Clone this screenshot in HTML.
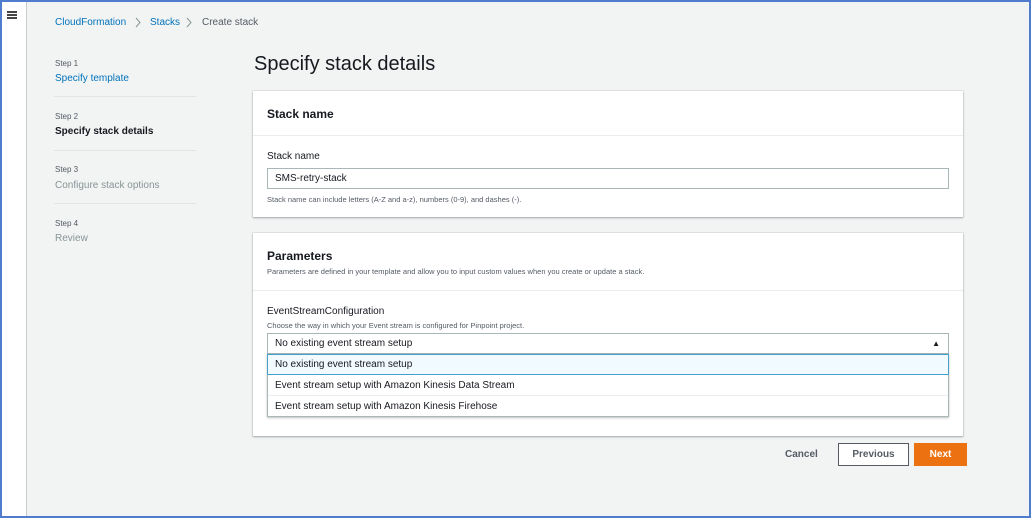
<!DOCTYPE html>
<html><head><meta charset="utf-8"><style>
*{box-sizing:border-box;margin:0;padding:0}
body{width:1031px;height:518px;overflow:hidden;font-family:"Liberation Sans",sans-serif;background:#f2f3f3;position:relative;color:#16191f}
.frame{position:absolute;left:0;top:0;width:1031px;height:518px;border:2px solid #4f7ccc;pointer-events:none;z-index:10}
.nav{position:absolute;left:0;top:0;width:27px;height:518px;background:#fff;border-right:1px solid #c8cbcc}
.a{position:absolute;white-space:nowrap}
.link{color:#0073bb}
.card{position:absolute;background:#fff;box-shadow:0 1px 2px rgba(0,28,36,.3),0 0 0 1px #e4e6e6}
.inp{position:absolute;border:1px solid #aab7b8;background:#fff;font-size:10px;padding-left:7px;display:flex;align-items:center}
.sep{position:absolute;left:54px;width:142px;height:1px;background:#e1e4e4}
.hb{position:absolute;left:7px;width:10px;height:1.5px;background:#444}
</style></head><body>
<div class="nav"><div class="hb" style="top:11px"></div><div class="hb" style="top:14px"></div><div class="hb" style="top:17px"></div></div>
<div class="a link" style="left:55px;top:17px;font-size:10px">CloudFormation</div>
<svg class="a" style="left:134px;top:17px" width="8" height="11"><path d="M2 1l4 4.5L2 10" fill="none" stroke="#879596" stroke-width="1"/></svg>
<div class="a link" style="left:150px;top:17px;font-size:10px">Stacks</div>
<svg class="a" style="left:185px;top:17px" width="8" height="11"><path d="M2 1l4 4.5L2 10" fill="none" stroke="#879596" stroke-width="1"/></svg>
<div class="a" style="left:202px;top:17px;font-size:10px;color:#545b64">Create stack</div>

<div class="a" style="left:55px;top:59px;font-size:8px;color:#545b64">Step 1</div>
<div class="a link" style="left:55px;top:73px;font-size:10px">Specify template</div>
<div class="sep" style="top:96px"></div>
<div class="a" style="left:55px;top:112px;font-size:8px;color:#545b64">Step 2</div>
<div class="a" style="left:55px;top:126px;font-size:10px;font-weight:bold">Specify stack details</div>
<div class="sep" style="top:150px"></div>
<div class="a" style="left:55px;top:165px;font-size:8px;color:#545b64">Step 3</div>
<div class="a" style="left:55px;top:180px;font-size:10px;color:#879596">Configure stack options</div>
<div class="sep" style="top:203px"></div>
<div class="a" style="left:55px;top:219px;font-size:8px;color:#545b64">Step 4</div>
<div class="a" style="left:55px;top:233px;font-size:10px;color:#879596">Review</div>

<div class="a" style="left:254px;top:53px;font-size:20px">Specify stack details</div>

<div class="card" style="left:253px;top:91px;width:710px;height:126px">
 <div style="height:45px;border-bottom:1px solid #eaeded"></div>
 <div class="a" style="left:14px;top:16px;font-size:12px;font-weight:bold">Stack name</div>
 <div class="a" style="left:14px;top:60px;font-size:10px">Stack name</div>
 <div class="inp" style="left:14px;top:77px;width:682px;height:21px">SMS-retry-stack</div>
 <div class="a" style="left:14px;top:104px;font-size:7.5px;color:#545b64">Stack name can include letters (A-Z and a-z), numbers (0-9), and dashes (-).</div>
</div>

<div class="card" style="left:253px;top:233px;width:710px;height:203px">
 <div style="height:58px;border-bottom:1px solid #eaeded"></div>
 <div class="a" style="left:14px;top:16px;font-size:12px;font-weight:bold">Parameters</div>
 <div class="a" style="left:14px;top:34px;font-size:7.5px;color:#545b64">Parameters are defined in your template and allow you to input custom values when you create or update a stack.</div>
 <div class="a" style="left:14px;top:73px;font-size:10px">EventStreamConfiguration</div>
 <div class="a" style="left:14px;top:88px;font-size:7.5px;color:#545b64">Choose the way in which your Event stream is configured for Pinpoint project.</div>
 <div class="inp" style="left:14px;top:100px;width:682px;height:21px">No existing event stream setup<span style="position:absolute;right:8px;font-size:8px">▲</span></div>
 <div style="position:absolute;left:14px;top:121px;width:682px;height:63px;background:#fff;border:1px solid #aab7b8;box-shadow:0 1px 2px rgba(0,0,0,.25)">
  <div class="inp" style="position:relative;border:1px solid #44a0c8;background:#f1faff;height:21px;margin:-1px -1px 0">No existing event stream setup</div>
  <div class="inp" style="position:relative;border:0;border-bottom:1px solid #eaeded;height:21px">Event stream setup with Amazon Kinesis Data Stream</div>
  <div class="inp" style="position:relative;border:0;height:20px">Event stream setup with Amazon Kinesis Firehose</div>
 </div>
</div>

<div class="a" style="left:785px;top:449px;font-size:10px;font-weight:bold;color:#545b64">Cancel</div>
<div class="a" style="left:838px;top:443px;width:71px;height:23px;border:1px solid #545b64;background:#fff;font-size:10px;font-weight:bold;color:#545b64;display:flex;align-items:center;justify-content:center">Previous</div>
<div class="a" style="left:914px;top:443px;width:53px;height:23px;background:#ec7211;color:#fff;font-size:10px;font-weight:bold;display:flex;align-items:center;justify-content:center">Next</div>
<div class="frame"></div>
</body></html>
